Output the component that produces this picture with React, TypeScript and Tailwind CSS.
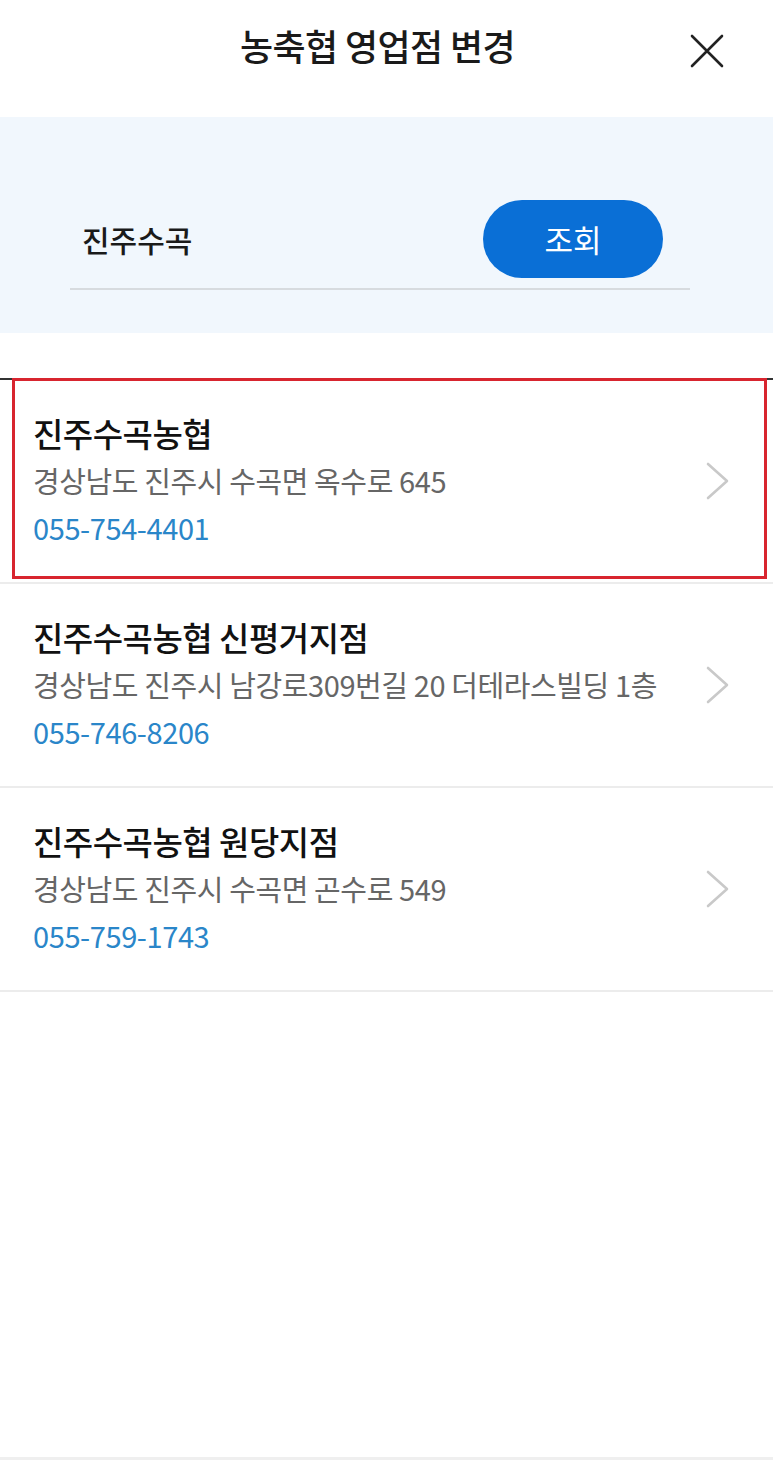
const branches = [
  {
    name: "진주수곡농협",
    address: "경상남도 진주시 수곡면 옥수로 645",
    phone: "055-754-4401",
  },
  {
    name: "진주수곡농협 신평거지점",
    address: "경상남도 진주시 남강로309번길 20 더테라스빌딩 1층",
    phone: "055-746-8206",
  },
  {
    name: "진주수곡농협 원당지점",
    address: "경상남도 진주시 수곡면 곤수로 549",
    phone: "055-759-1743",
  },
];

function CloseIcon() {
  return (
    <svg width="34" height="34" viewBox="0 0 34 34" fill="none" stroke="#222" strokeWidth="2.6" strokeLinecap="round">
      <path d="M2 2 L32 32 M32 2 L2 32" />
    </svg>
  );
}

function Chevron() {
  return (
    <svg width="24" height="38" viewBox="0 0 24 38" fill="none" stroke="#c9c9c9" strokeWidth="2.6" strokeLinecap="round" strokeLinejoin="round">
      <path d="M2 2 L21 19 L2 36" />
    </svg>
  );
}

export default function App() {
  return (
    <div className="flex h-[1460px] w-[773px] flex-col bg-white font-['Noto_Sans_CJK_KR','Noto_Sans',sans-serif] text-[#111]">
      {/* header */}
      <header className="grid h-[117px] grid-cols-[1fr_auto_1fr] items-start pt-[20px]">
        <div />
        <h1 className="mr-[18px] text-[36px] font-medium leading-[50px] tracking-[-0.6px] text-[#1a1a1a]">
          농축협 영업점 변경
        </h1>
        <div className="flex justify-end pr-[49px] pt-[14px]">
          <CloseIcon />
        </div>
      </header>

      {/* search */}
      <section className="h-[216px] bg-[#f1f7fd] px-[70px] pt-[83px]">
        <div className="w-[620px] border-b-2 border-[#d7dbdf] pb-[10px]">
          <div className="flex h-[78px] items-center justify-between pl-[12px] pr-[27px]">
            <span className="text-[30px] font-medium text-[#1a1a1a]">진주수곡</span>
            <button className="h-[78px] w-[180px] rounded-full bg-[#0a6fd6] text-[31px] text-white">
              조회
            </button>
          </div>
        </div>
      </section>

      {/* list */}
      <ul className="relative mt-[45px] border-t-2 border-[#333]">
        {branches.map((b, i) => (
          <li
            key={b.name}
            className="flex h-[204px] items-center justify-between border-b-2 border-[#ececec] pl-[33px] pr-[43px]"
          >
            <div className="flex flex-col pb-[2px]">
              <span className="text-[33px] font-medium leading-[46px] tracking-[-0.5px]">{b.name}</span>
              <span className="mt-[1px] text-[29px] leading-[46px] tracking-[-0.4px] text-[#666]">
                {b.address}
              </span>
              <span className="mt-[1px] text-[29px] leading-[46px] tracking-[-0.4px] text-[#2a86c9]">
                {b.phone}
              </span>
            </div>
            <Chevron />
            {i === 0 && (
              <div className="pointer-events-none absolute left-[12px] right-[6px] top-[-2px] h-[201px] border-[3px] border-[#d8252f]" />
            )}
          </li>
        ))}
      </ul>

      <div className="flex-1" />
      <div className="h-[3px] bg-[#efefef]" />
    </div>
  );
}
